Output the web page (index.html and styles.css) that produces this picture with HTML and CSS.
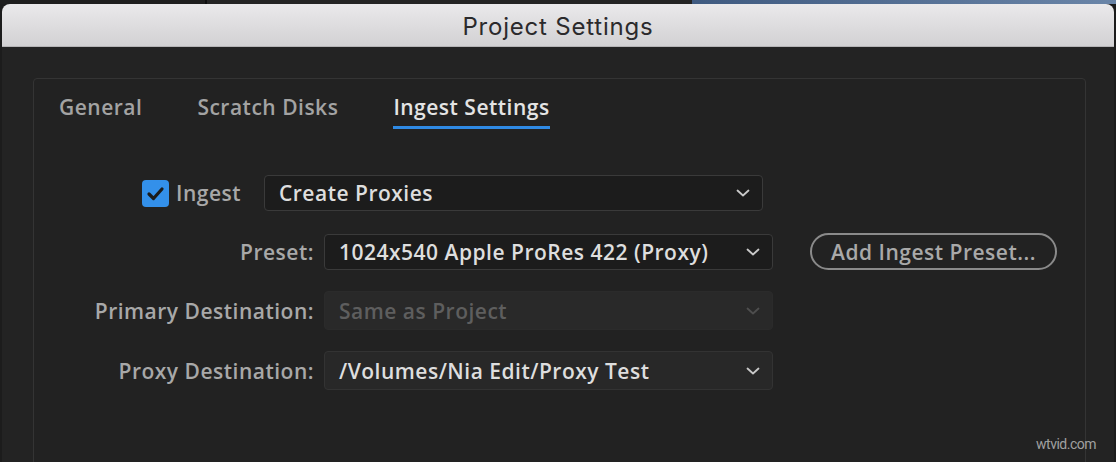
FILE: index.html
```html
<!DOCTYPE html>
<html lang="en">
<head>
    <meta charset="UTF-8">
    <title>Project Settings</title>
    <link rel="stylesheet" href="styles.css">
</head>
<body>
    <div class="desktop-strip">
        <div class="strip-left"></div>
        <div class="strip-mid"></div>
        <div class="strip-photo"></div>
    </div>
    <div class="window">
        <div class="titlebar">Project Settings</div>
        <div class="window-body">
            <div class="panel">
                <div class="tabs">
                    <div class="tab">General</div>
                    <div class="tab">Scratch Disks</div>
                    <div class="tab active">Ingest Settings</div>
                </div>

                <div class="ingest-row">
                    <div class="checkbox">
                        <svg width="19" height="15" viewBox="0 0 19 15"><path d="M3 8 L7.5 12.5 L16 3" fill="none" stroke="#1b1b1b" stroke-width="3.2" stroke-linecap="round" stroke-linejoin="round"/></svg>
                    </div>
                    <span class="ingest-label">Ingest</span>
                    <div class="select wide">
                        <span>Create Proxies</span>
                        <svg class="chevron" width="14" height="8" viewBox="0 0 14 8"><path d="M1.5 1.5 L7 6.5 L12.5 1.5" fill="none" stroke="#c9c9c9" stroke-width="1.8" stroke-linecap="round" stroke-linejoin="round"/></svg>
                    </div>
                </div>

                <div class="form">
                    <label class="field-label">Preset:</label>
                    <div class="select">
                        <span>1024x540 Apple ProRes 422 (Proxy)</span>
                        <svg class="chevron" width="14" height="8" viewBox="0 0 14 8"><path d="M1.5 1.5 L7 6.5 L12.5 1.5" fill="none" stroke="#c9c9c9" stroke-width="1.8" stroke-linecap="round" stroke-linejoin="round"/></svg>
                    </div>
                    <button class="pill-btn">Add Ingest Preset...</button>

                    <label class="field-label">Primary Destination:</label>
                    <div class="select disabled">
                        <span>Same as Project</span>
                        <svg class="chevron" width="14" height="8" viewBox="0 0 14 8"><path d="M1.5 1.5 L7 6.5 L12.5 1.5" fill="none" stroke="#4e4e4e" stroke-width="1.8" stroke-linecap="round" stroke-linejoin="round"/></svg>
                    </div>
                    <div></div>

                    <label class="field-label">Proxy Destination:</label>
                    <div class="select soft">
                        <span>/Volumes/Nia Edit/Proxy Test</span>
                        <svg class="chevron" width="14" height="8" viewBox="0 0 14 8"><path d="M1.5 1.5 L7 6.5 L12.5 1.5" fill="none" stroke="#c9c9c9" stroke-width="1.8" stroke-linecap="round" stroke-linejoin="round"/></svg>
                    </div>
                    <div></div>
                </div>
            </div>
        </div>
    </div>
    <div class="watermark">wtvid.com</div>
</body>
</html>
```

FILE: styles.css
```css
* {
    margin: 0;
    padding: 0;
    box-sizing: border-box;
}
body {
    background: #1c1c1c;
    font-family: 'Open Sans', sans-serif;
    width: 1116px;
    height: 462px;
    overflow: hidden;
    position: relative;
}
.desktop-strip {
    display: flex;
    height: 4px;
}
.strip-left {
    width: 207px;
    background: #1e1e1e;
    border-right: 2px solid #0e0e0e;
}
.strip-mid {
    width: 485px;
    background: #242424;
}
.strip-photo {
    flex: 1;
    background: linear-gradient(to right, #3f5a80, #6a85a8);
}
.window {
    margin: 0 2px;
    height: 458px;
    display: flex;
    flex-direction: column;
}
.titlebar {
    height: 43px;
    background: linear-gradient(to bottom, #eae9eb, #d2d1d3);
    border-bottom: 1px solid #b5b4b6;
    border-radius: 8px 8px 0 0;
    text-align: center;
    font-family: 'Inter', 'Roboto', sans-serif;
    font-size: 24px;
    letter-spacing: 0.8px;
    line-height: 46px;
    color: #2b2a2c;
}
.window-body {
    flex: 1;
    background: #232323;
    padding: 31px 0 0 31px;
}
.panel {
    width: 1053px;
    height: 400px;
    border: 1px solid #343434;
    border-radius: 4px;
    background: #222222;
}
.tabs {
    display: flex;
    gap: 55px;
    padding: 14px 0 0 25px;
}
.tab {
    font-size: 21px;
    font-weight: 600;
    letter-spacing: 0.5px;
    color: #a3a3a3;
    padding-bottom: 5px;
    border-bottom: 3px solid transparent;
    line-height: 28px;
}
.tab.active {
    color: #e4e4e4;
    border-bottom-color: #2f8ae4;
}
.ingest-row {
    display: flex;
    align-items: center;
    padding: 46px 0 0 108px;
}
.checkbox {
    width: 27px;
    height: 27px;
    background: #3390ea;
    border-radius: 4px;
    display: flex;
    align-items: center;
    justify-content: center;
}
.ingest-label {
    font-size: 21px;
    font-weight: 600;
    letter-spacing: 0.5px;
    color: #a8a8a8;
    margin-left: 7px;
    width: 88px;
    line-height: 28px;
}
.select {
    height: 36px;
    background: #1c1c1c;
    border: 1px solid #3a3a3a;
    border-radius: 4px;
    display: flex;
    align-items: center;
    justify-content: space-between;
    padding: 0 12px 0 14px;
    font-size: 21px;
    font-weight: 600;
    letter-spacing: 0.5px;
    color: #dedede;
    white-space: nowrap;
}
.select.wide {
    width: 499px;
}
.select.disabled {
    background: #292929;
    border-color: #2b2b2b;
    color: #5e5e5e;
    height: 39px;
}
.select.soft {
    background: #282828;
    border-color: #333333;
    height: 39px;
}
.chevron {
    flex-shrink: 0;
}
.form {
    display: grid;
    grid-template-columns: 280px 449px 247px;
    column-gap: 10px;
    row-gap: 21px;
    align-items: center;
    margin-top: 22px;
}
.form .pill-btn {
    margin-left: 27px;
}
.field-label {
    text-align: right;
    font-size: 21px;
    font-weight: 600;
    letter-spacing: 0.5px;
    color: #a8a8a8;
    white-space: nowrap;
}
.pill-btn {
    height: 37px;
    width: 247px;
    border: 2px solid #8a8a8a;
    border-radius: 19px;
    background: transparent;
    font-family: 'Open Sans', sans-serif;
    font-size: 21px;
    font-weight: 600;
    letter-spacing: 0.5px;
    color: #a9a9a9;
    white-space: nowrap;
}
.watermark {
    position: absolute;
    right: 20px;
    bottom: 10px;
    font-family: 'Roboto', sans-serif;
    font-size: 14px;
    letter-spacing: -0.5px;
    color: #a0a0a0;
}
```
